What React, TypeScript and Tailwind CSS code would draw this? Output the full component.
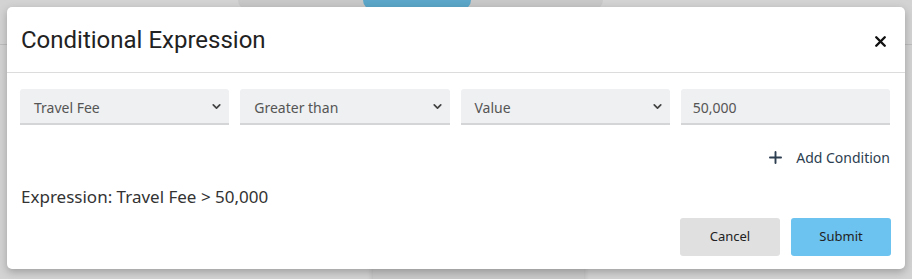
import { ChevronDown, Plus, X } from 'lucide-react';

const font = { fontFamily: '"Noto Sans", "Open Sans", sans-serif' };

function SelectBox({ label }: { label: string }) {
  return (
    <div className="h-[36px] rounded-t-[3px] bg-[#eef0f1] border-b-2 border-[#d3d5d6] flex items-center justify-between pl-[14px] pr-[6px]">
      <span className="text-[14px] text-[#555] pt-[2px]">{label}</span>
      <ChevronDown size={13} strokeWidth={3.2} className="text-[#444]" />
    </div>
  );
}

export default function App() {
  return (
    <div className="relative w-[912px] h-[279px] overflow-hidden bg-[#d3d3d3]" style={font}>
      {/* page behind the overlay */}
      <div className="flex pl-[238px]">
        <div className="w-[365px] h-[20px] -mt-[10px] rounded-full bg-[#c8c8c8] pl-[125px]">
          <div className="w-[108px] h-[20px] rounded-full bg-[#5ba6c9]" />
        </div>
      </div>
      <div className="mt-[34px] h-px bg-[#bdbdbd]" />
      <div className="absolute left-[373px] top-[255px] w-[211px] h-[30px] bg-[#c9c9c9] shadow-[0_0_6px_rgba(0,0,0,0.15)]" />

      {/* modal */}
      <div className="absolute left-[7px] top-[7px] w-[898px] h-[262px] bg-white rounded-[5px] shadow-[0_3px_8px_rgba(0,0,0,0.25)] flex flex-col">
        <div className="h-[66px] border-b border-[#dcdcdc] flex items-center justify-between pl-[14px] pr-[16px]">
          <h2 className="text-[24px] text-[#222]" style={{ fontFamily: 'Roboto, sans-serif' }}>
            Conditional Expression
          </h2>
          <X size={17} strokeWidth={3.4} className="text-[#111] mt-[4px]" />
        </div>

        <div className="pt-[16px] pl-[13px] pr-[15px] grid grid-cols-4 gap-[11px]">
          <SelectBox label="Travel Fee" />
          <SelectBox label="Greater than" />
          <SelectBox label="Value" />
          <div className="h-[36px] rounded-t-[3px] bg-[#eef0f1] border-b-2 border-[#d3d5d6] flex items-center pl-[12px]">
            <span className="text-[14px] text-[#555] pt-[2px]">50,000</span>
          </div>
        </div>

        <div className="mt-[22px] pr-[15px] flex justify-end items-center gap-[11px] text-[#2c3e50]">
          <Plus size={19} strokeWidth={2.4} />
          <span className="text-[14px]">Add Condition</span>
        </div>

        <div className="mt-[16px] pl-[14px] text-[17px] text-[#333]">Expression: Travel Fee &gt; 50,000</div>

        <div className="mt-[8px] pr-[14px] flex justify-end gap-[11px]">
          <button className="w-[100px] h-[38px] rounded-[3px] bg-[#e0e0e0] text-[13px] text-[#222]">Cancel</button>
          <button className="w-[100px] h-[38px] rounded-[3px] bg-[#6cc3f0] text-[13px] text-[#222]">Submit</button>
        </div>
      </div>
    </div>
  );
}
